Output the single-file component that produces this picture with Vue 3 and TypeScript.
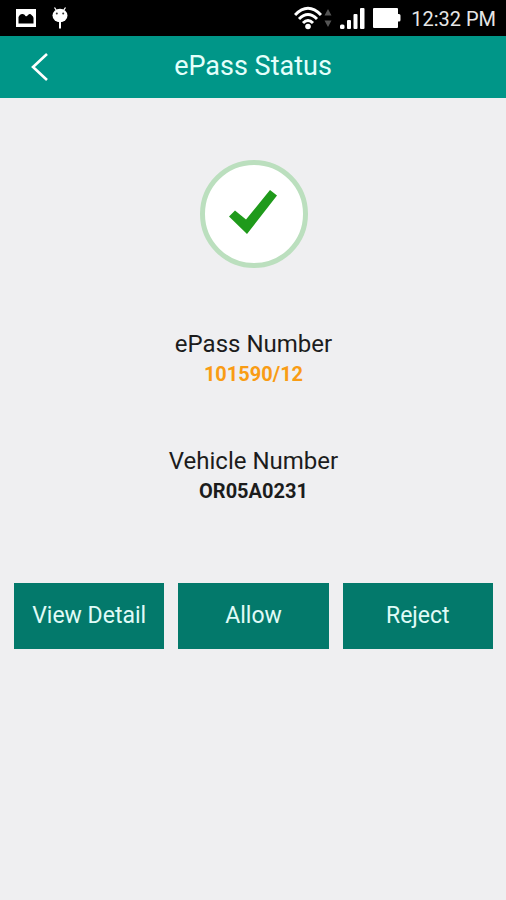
<script setup lang="ts">
interface Detail {
  label: string
  value: string
  accent: boolean
}

const details: Detail[] = [
  { label: 'ePass Number', value: '101590/12', accent: true },
  { label: 'Vehicle Number', value: 'OR05A0231', accent: false },
]

const actions: string[] = ['View Detail', 'Allow', 'Reject']
</script>

<template>
  <div class="screen">
    <div class="status-bar">
      <svg class="picture" width="20" height="18" viewBox="0 0 20 18" aria-hidden="true">
        <rect width="20" height="18" fill="#fff" />
        <path fill="#000" d="M2.500 14.500V8Q4 4.500 6.500 5Q8.500 5 9.500 7Q10.500 8 12 6Q14 4 15.500 6Q17.500 7.500 17.500 9V14.500Z" />
      </svg>
      <svg class="droid" width="16" height="22" viewBox="0 0 16 22" aria-hidden="true">
        <path d="M2.500 0.500L4.500 3.500M13.500 0.500L11.500 3.500" stroke="#fff" stroke-width="1.3" />
        <ellipse cx="8" cy="8.500" rx="7.500" ry="6.800" fill="#fff" />
        <path d="M7 14H9V21.500H7Z" fill="#fff" />
        <circle cx="4.800" cy="6.500" r="1" fill="#333" />
        <circle cx="11.200" cy="6.500" r="1" fill="#333" />
      </svg>
      <div class="system">
        <svg class="wifi" width="28" height="24" viewBox="0 0 28 24" aria-hidden="true">
          <g fill="none" stroke="#fff" stroke-width="3">
            <path d="M1 9Q14 -4.500 27 9" />
            <path d="M5 13Q14 4 23 13" />
            <path d="M9 17Q14 12 19 17" />
          </g>
          <circle cx="14" cy="20.500" r="2.800" fill="#fff" />
        </svg>
        <svg class="traffic" width="8" height="18" viewBox="0 0 8 18" aria-hidden="true">
          <path fill="#555" d="M4 0L7.500 6.500H.5ZM4 18L.5 11.500H7.500Z" />
        </svg>
        <svg class="signal" width="25" height="21" viewBox="0 0 25 21" aria-hidden="true">
          <g fill="#fff">
            <rect y="16.500" width="4.500" height="4.500" rx="1.500" />
            <rect x="7" y="12" width="4" height="9" rx="1" />
            <rect x="13.500" y="6" width="4" height="15" rx="1" />
            <rect x="20" y="0" width="4.500" height="21" rx="1" />
          </g>
        </svg>
        <svg class="battery" width="28" height="20" viewBox="0 0 28 20" aria-hidden="true">
          <path fill="#fff" d="M1 0H24Q25 0 25 1V6H26Q27.500 6 27.500 7.500V12Q27.500 13.500 26 13.500H25V19Q25 20 24 20H1Q0 20 0 19V1Q0 0 1 0Z" />
        </svg>
        <time>12:32 PM</time>
      </div>
    </div>

    <header class="app-bar">
      <button class="back" type="button" aria-label="Back">
        <svg width="18" height="30" viewBox="0 0 18 30" aria-hidden="true">
          <path d="M16 2L2 15L16 28" fill="none" stroke="#fff" stroke-width="2.6" />
        </svg>
      </button>
      <h1>ePass Status</h1>
    </header>

    <main>
      <svg class="badge" width="108" height="108" viewBox="0 0 108 108" aria-hidden="true">
        <circle cx="54" cy="54" r="51.500" fill="#fff" stroke="#bbdfbe" stroke-width="5" />
        <path d="M29 56.500L35 50.500L46 59.500L70 30L77 35.500L47 74Z" fill="#1f9a1b" />
      </svg>

      <dl>
        <div v-for="item in details" :key="item.label" class="detail">
          <dt>{{ item.label }}</dt>
          <dd :class="{ accent: item.accent }">{{ item.value }}</dd>
        </div>
      </dl>

      <div class="actions">
        <button v-for="action in actions" :key="action" type="button">{{ action }}</button>
      </div>
    </main>
  </div>
</template>

<style>
body {
  margin: 0;
  background: #efeff1;
}
</style>

<style scoped>
.screen {
  min-height: 100vh;
  background: #efeff1;
  color: #1c1c1c;
  font-family: Roboto, "Liberation Sans", sans-serif;
}

svg {
  display: block;
  flex: none;
}

.status-bar {
  display: flex;
  align-items: center;
  height: 36px;
  padding: 0 10px 0 16px;
  background: #000;
}

.droid {
  margin-left: 16px;
}

.system {
  display: flex;
  align-items: center;
  margin-left: auto;
}

.traffic {
  margin-left: 2px;
}

.signal {
  margin-left: 8px;
}

.battery {
  margin-left: 8px;
}

time {
  margin-left: 10px;
  padding-top: 2px;
  color: #e6e6e6;
  font-size: 20px;
  line-height: 24px;
  white-space: nowrap;
}

.app-bar {
  display: grid;
  grid-template-columns: 80px 1fr 80px;
  align-items: center;
  height: 62px;
  background: #009688;
}

.back {
  display: flex;
  justify-content: center;
  padding: 12px 0;
  border: 0;
  background: none;
}

h1 {
  margin: 0;
  padding-bottom: 2px;
  color: #e4fffb;
  font-size: 27px;
  font-weight: 400;
  line-height: 32px;
  text-align: center;
}

main {
  display: flex;
  flex-direction: column;
  align-items: center;
  padding: 62px 13px 0 14px;
}

dl {
  display: grid;
  gap: 56px;
  margin: 60px 0 77px;
  text-align: center;
}

dt {
  font-size: 24px;
  line-height: 32px;
}

dd {
  margin: 0;
  font-size: 20px;
  font-weight: 700;
  line-height: 29px;
}

.accent {
  color: #f99c14;
}

.actions {
  display: grid;
  grid-template-columns: repeat(3, 1fr);
  gap: 14px;
  align-self: stretch;
}

.actions button {
  height: 66px;
  padding: 0;
  border: 0;
  background: #03796b;
  color: #e0fbf7;
  font-family: inherit;
  font-size: 23px;
  line-height: 28px;
}
</style>
